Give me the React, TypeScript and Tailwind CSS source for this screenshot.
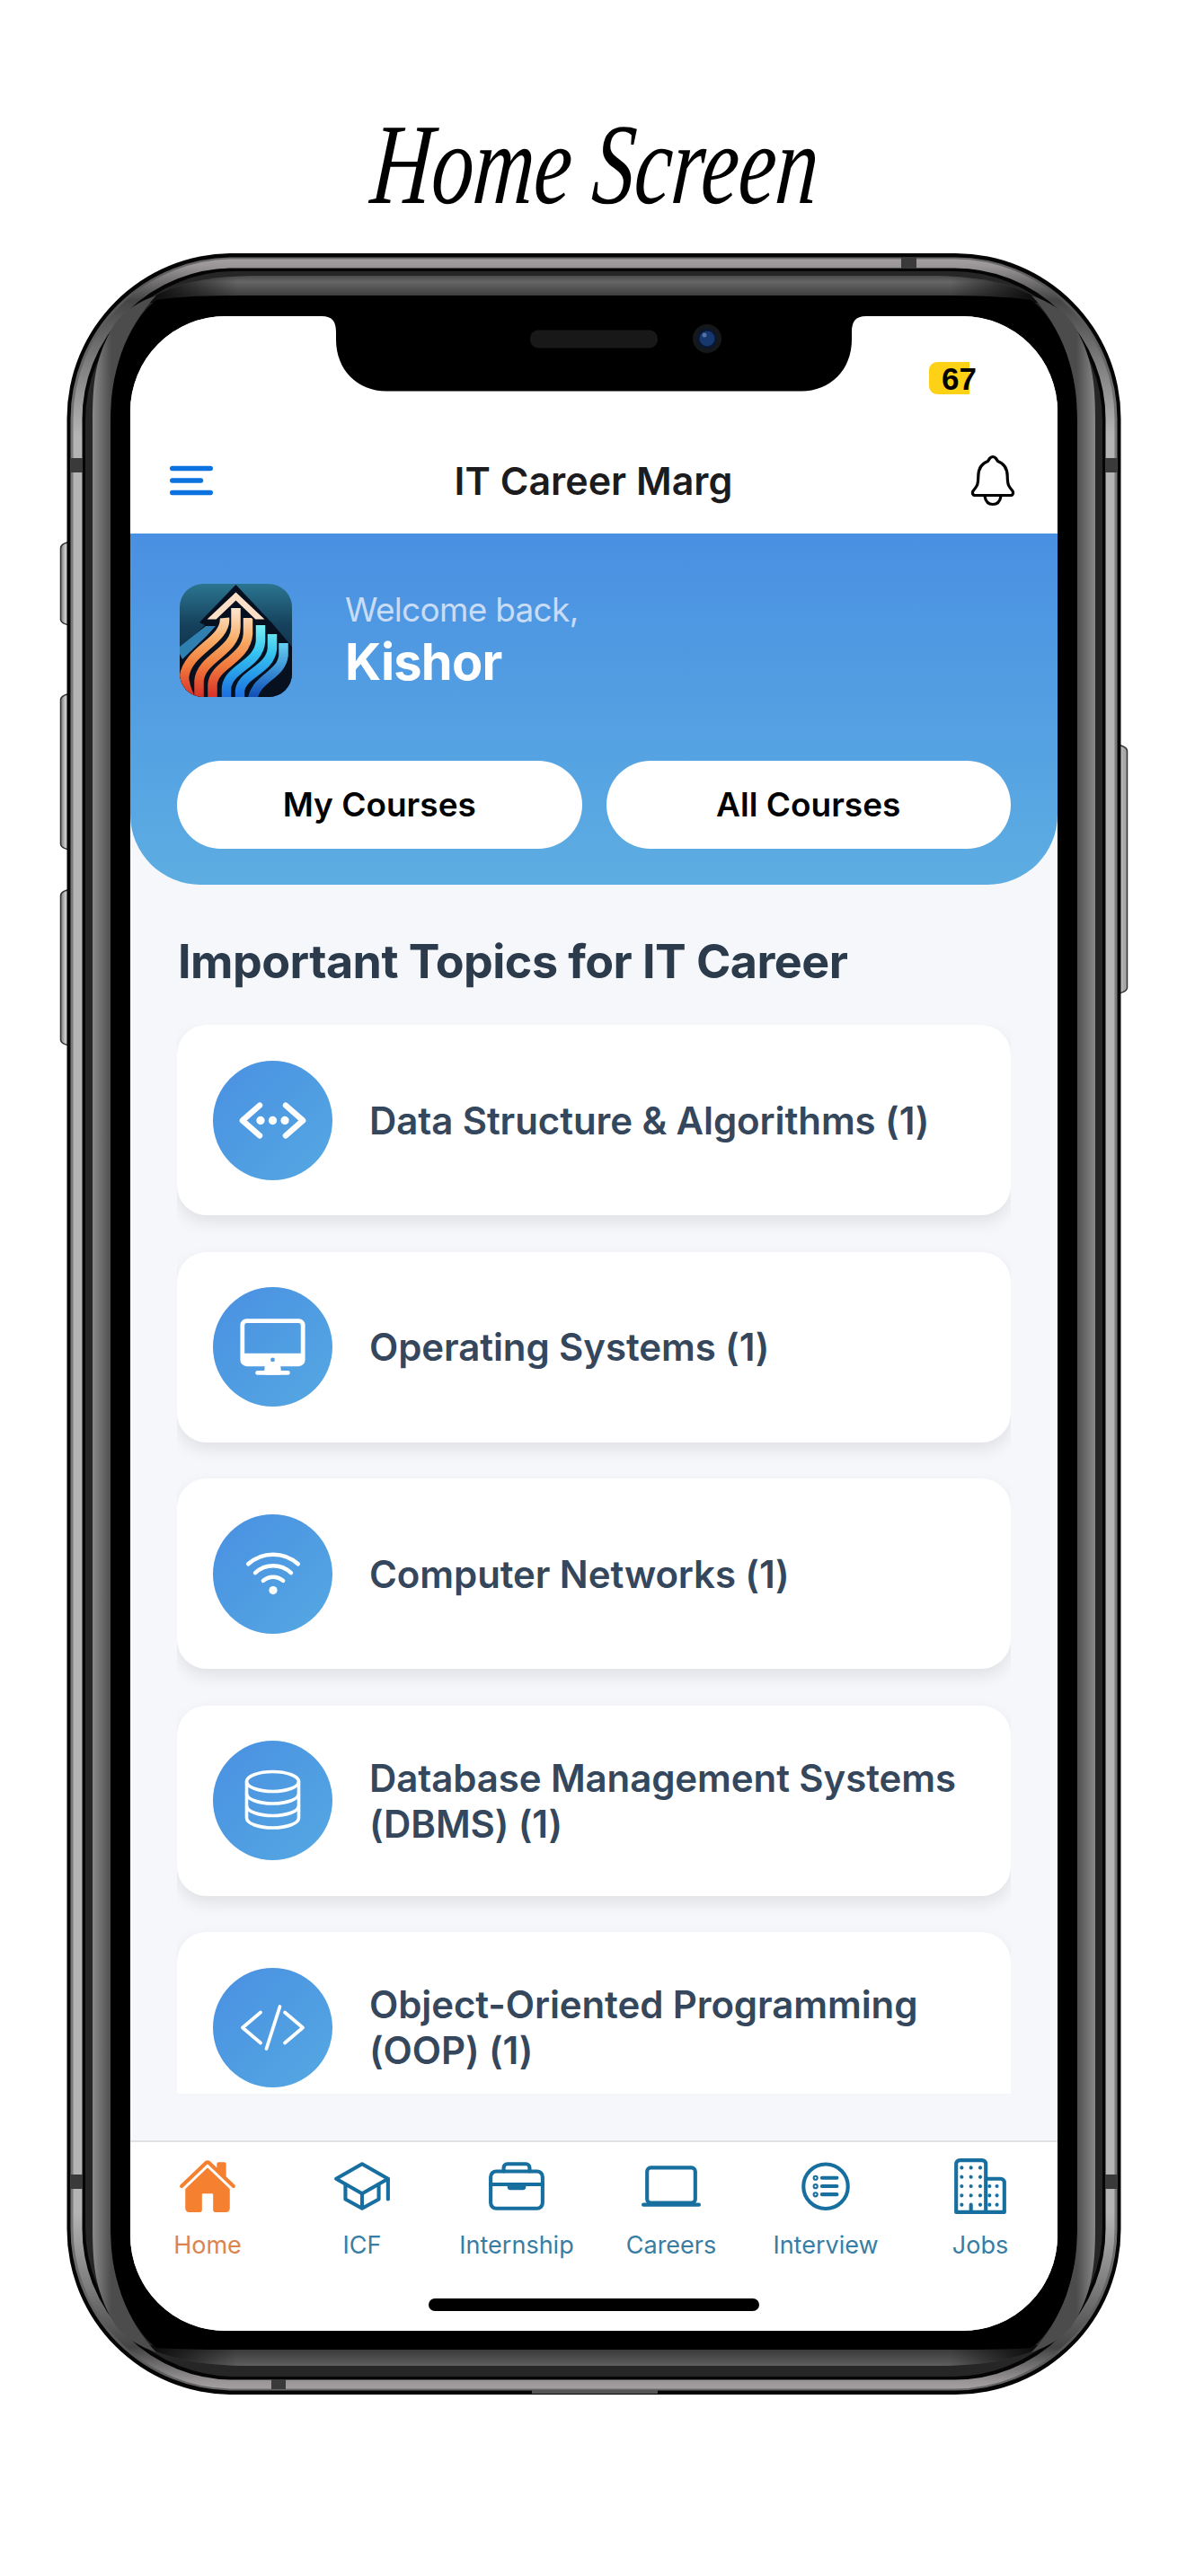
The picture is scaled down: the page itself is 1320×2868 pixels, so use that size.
import React from "react";
import {
  IoHome,
  IoSchoolOutline,
  IoBriefcaseOutline,
  IoLaptopOutline,
  IoListCircleOutline,
  IoBusinessOutline,
  IoCodeWorking,
  IoDesktopOutline,
  IoWifiOutline,
} from "react-icons/io5";

const sidePath =
  "M103 470 C103 425 106 396 128 360 C138 346 154 336 174 329 C158 346 144 368 135 393 C126 420 123 440 123 470 L123 2478 C123 2508 126 2528 135 2555 C144 2580 158 2602 174 2619 C154 2612 138 2602 128 2588 C106 2552 103 2523 103 2478 Z";

const topGlow = "M160 336 C192 316 230 308 280 307 L1042 307 C1092 308 1130 316 1162 336 L1100 345 L222 345 Z";
const bottomGlow = "M160 2612 C192 2628 230 2634 280 2634 L1042 2634 C1092 2634 1130 2628 1162 2612 L1100 2603 L222 2603 Z";

function PhoneFrame() {
  return (
    <svg className="absolute left-0 top-0" width="1320" height="2868" viewBox="0 0 1320 2868" aria-hidden="true">
      <defs>
        <linearGradient id="rim" gradientUnits="userSpaceOnUse" x1="0" y1="282" x2="0" y2="2666">
          <stop offset="0" stopColor="#aaa6a8" />
          <stop offset="0.006" stopColor="#9a9698" />
          <stop offset="0.022" stopColor="#444" />
          <stop offset="0.05" stopColor="#7c7c7c" />
          <stop offset="0.085" stopColor="#b4b4b4" />
          <stop offset="0.915" stopColor="#b4b4b4" />
          <stop offset="0.95" stopColor="#7c7c7c" />
          <stop offset="0.978" stopColor="#444" />
          <stop offset="0.994" stopColor="#9a9698" />
          <stop offset="1" stopColor="#aaa6a8" />
        </linearGradient>
        <linearGradient id="rimShade" gradientUnits="userSpaceOnUse" x1="0" y1="282" x2="0" y2="2666">
          <stop offset="0" stopColor="#6b696a" />
          <stop offset="0.02" stopColor="#555" />
          <stop offset="0.085" stopColor="#7a7a7a" />
          <stop offset="0.915" stopColor="#7a7a7a" />
          <stop offset="0.98" stopColor="#555" />
          <stop offset="1" stopColor="#6b696a" />
        </linearGradient>
        <linearGradient id="side" gradientUnits="userSpaceOnUse" x1="103" y1="0" x2="124" y2="0">
          <stop offset="0" stopColor="#898989" />
          <stop offset="1" stopColor="#4c4c4c" />
        </linearGradient>
        <linearGradient id="fade" gradientUnits="userSpaceOnUse" x1="165" y1="0" x2="1157" y2="0">
          <stop offset="0" stopColor="#0a0a0a" />
          <stop offset="0.1" stopColor="#0a0a0a" stopOpacity="0" />
          <stop offset="0.9" stopColor="#0a0a0a" stopOpacity="0" />
          <stop offset="1" stopColor="#0a0a0a" />
        </linearGradient>
        <linearGradient id="top" gradientUnits="userSpaceOnUse" x1="0" y1="307" x2="0" y2="329">
          <stop offset="0" stopColor="#4a4a4a" />
          <stop offset="0.3" stopColor="#666" />
          <stop offset="1" stopColor="#3e3e3e" />
        </linearGradient>
        <linearGradient id="bottom" gradientUnits="userSpaceOnUse" x1="0" y1="2616" x2="0" y2="2634">
          <stop offset="0" stopColor="#3a3a3a" />
          <stop offset="1" stopColor="#5e5e5e" />
        </linearGradient>
        <linearGradient id="key" x1="0" y1="0" x2="1" y2="0">
          <stop offset="0" stopColor="#777" />
          <stop offset="0.35" stopColor="#cacaca" />
          <stop offset="0.75" stopColor="#a8a8a8" />
        </linearGradient>
      </defs>
      <g stroke="#333" strokeWidth="1.500" fill="url(#key)">
        <path d="M82 603 Q68 604 67.500 610 V690 Q68 695 82 697 Z" />
        <path d="M82 772 Q68 773 67.500 779 V940 Q68 945 82 947 Z" />
        <path d="M82 990 Q68 991 67.500 997 V1158 Q68 1163 82 1165 Z" />
        <path d="M1240 829 Q1254 830 1254.500 836 V1100 Q1254 1105 1240 1107 Z" />
      </g>
      <rect x="74.500" y="282" width="1173" height="2384" rx="184" fill="#050505" />
      <rect x="80.500" y="288.500" width="1161" height="2371" rx="178" fill="none" stroke="url(#rimShade)" strokeWidth="4" />
      <rect x="86.500" y="293.500" width="1149" height="2361" rx="173" fill="none" stroke="url(#rim)" strokeWidth="10" />
      <rect x="93.500" y="300.500" width="1135" height="2347" rx="168" fill="#262626" stroke="#050505" strokeWidth="3" />
      <path d={topGlow} fill="url(#top)" />
      <path d={topGlow} fill="url(#fade)" />
      <path d={bottomGlow} fill="url(#bottom)" />
      <path d={bottomGlow} fill="url(#fade)" />
      <path
        d="M123 470 C123 440 126 420 135 393 C144 368 158 346 174 334 C202 330 236 329 280 329 L1042 329 C1086 329 1120 330 1148 334 C1164 346 1178 368 1187 393 C1196 420 1199 440 1199 470 L1199 2478 C1199 2508 1196 2528 1187 2555 C1178 2580 1164 2602 1148 2614 C1120 2616 1086 2616 1042 2616 L280 2616 C236 2616 202 2616 174 2614 C158 2602 144 2580 135 2555 C126 2528 123 2508 123 2478 Z"
        fill="#000"
      />
      <path d={sidePath} fill="url(#side)" />
      <path d={sidePath} fill="url(#side)" transform="translate(1322 0) scale(-1 1)" />
      <g fill="#3a3a3a">
        <rect x="79" y="510" width="13" height="16" />
        <rect x="1230" y="510" width="13" height="16" />
        <rect x="79" y="2421" width="13" height="16" />
        <rect x="1230" y="2421" width="13" height="16" />
        <rect x="1003" y="287" width="17" height="12" />
        <rect x="302" y="2649" width="16" height="11" />
      </g>
      <rect x="592" y="2661" width="140" height="4" fill="#555" />
    </svg>
  );
}

function Notch() {
  return (
    <svg className="absolute left-[213px] top-0" width="606" height="86" viewBox="0 0 606 86" aria-hidden="true">
      <path d="M0 -2 V0 C12 0 16 6 16 18 V26 C16 60 40 83.500 72 83.500 H534 C566 83.500 590 60 590 26 V18 C590 6 594 0 606 0 V-2 Z" fill="#000" />
      <rect x="232" y="15.500" width="142" height="20" rx="9" fill="#181818" />
      <circle cx="429" cy="25" r="16" fill="#15181b" />
      <circle cx="429" cy="25" r="11" fill="#0a1730" />
      <circle cx="429" cy="25" r="8.500" fill="#17386f" />
      <circle cx="426" cy="21" r="2.500" fill="#5272a8" />
    </svg>
  );
}

function BellIcon() {
  return (
    <svg className="mb-[2px] h-[58px] w-[50px]" viewBox="0 0 50 58" fill="none" stroke="#000" strokeWidth="3.200" strokeLinecap="round" strokeLinejoin="round" aria-label="Notifications">
      <path d="M25 2.500 C21.500 2.500 21 5.500 19.500 7.500 C12.500 10 9 15.500 8.800 24 C8.600 34 7.500 35.500 3.500 40 C1.500 42.500 2.500 45.500 5.500 45.500 H44.500 C47.500 45.500 48.500 42.500 46.500 40 C42.500 35.500 41.400 34 41.200 24 C41 15.500 37.500 10 30.500 7.500 C29 5.500 28.500 2.500 25 2.500 Z" />
      <path d="M16 46.500 C17 52.500 20.500 55.500 25 55.500 C29.500 55.500 33 52.500 34 46.500" />
    </svg>
  );
}

function DatabaseIcon({ className }: { className?: string }) {
  return (
    <svg className={className} viewBox="0 0 77 77" fill="none" stroke="currentColor" strokeWidth="3.600" aria-hidden="true">
      <ellipse cx="38.500" cy="17.500" rx="29" ry="11" />
      <path d="M9.500 17.500 V58 C9.500 64 22.500 69 38.500 69 S67.500 64 67.500 58 V17.500" />
      <path d="M9.500 31 C9.500 37 22.500 42 38.500 42 S67.500 37 67.500 31 M9.500 44.500 C9.500 50.500 22.500 55.500 38.500 55.500 S67.500 50.500 67.500 44.500" />
    </svg>
  );
}

function CodeIcon({ className }: { className?: string }) {
  return (
    <svg className={className} viewBox="0 0 77 77" fill="none" stroke="currentColor" strokeWidth="3.800" strokeLinecap="round" strokeLinejoin="round" aria-hidden="true">
      <path d="M25 21.500 L5 38.500 L25 55.500 M52 21.500 L72 38.500 L52 55.500 M46.500 15 L31.500 62" />
    </svg>
  );
}

function AppLogo() {
  return (
    <svg className="h-[126px] w-[125px] rounded-[26px]" viewBox="0 0 125 126" preserveAspectRatio="none" aria-label="IT Career Marg logo">
      <defs>
        <linearGradient id="bg" x1="0" y1="0" x2="0" y2="1">
          <stop offset="0" stopColor="#2c7590" />
          <stop offset="0.35" stopColor="#16435e" />
          <stop offset="1" stopColor="#08172e" />
        </linearGradient>
        <linearGradient id="warm" gradientUnits="userSpaceOnUse" x1="0" y1="30" x2="0" y2="124">
          <stop offset="0" stopColor="#fde3c8" />
          <stop offset="0.35" stopColor="#f8ab66" />
          <stop offset="0.65" stopColor="#f07a3c" />
          <stop offset="1" stopColor="#d9352a" />
        </linearGradient>
        <linearGradient id="cool" gradientUnits="userSpaceOnUse" x1="0" y1="45" x2="0" y2="126">
          <stop offset="0" stopColor="#7df0f0" />
          <stop offset="0.4" stopColor="#35c3f0" />
          <stop offset="1" stopColor="#1a6fe0" />
        </linearGradient>
        <linearGradient id="cool2" gradientUnits="userSpaceOnUse" x1="0" y1="60" x2="0" y2="126">
          <stop offset="0" stopColor="#6fdcf8" />
          <stop offset="1" stopColor="#0f4fb8" />
        </linearGradient>
      </defs>
      <rect width="125" height="126" fill="url(#bg)" />
      <path d="M62.500 1 L103 44 L125 70 V126 H0 V74 L28 46 L22 43 Z" fill="#06101f" />
      <path d="M0 78 L0 70 L29 47 L40 47 L30 58 L3 84 Z" fill="#2f7fb0" />
      <g fill="none" strokeWidth="10.500">
        <path d="M50 38 C52 64 8 74 5 104 C5 112 8 118 12 128" stroke="url(#warm)" />
        <path d="M62.500 27 V48 C62 76 24 82 21.500 108 V128" stroke="url(#warm)" />
        <path d="M76 38 V56 C74 84 38 90 36.500 112 V128" stroke="url(#warm)" />
        <path d="M90 46 V64 C88 90 54 94 52 116 V128" stroke="url(#cool)" />
        <path d="M103 56 V72 C101 96 69 100 67 119 V128" stroke="url(#cool)" />
        <path d="M115.500 66 V80 C113 102 86 104 81 128" stroke="url(#cool2)" />
      </g>
      <path d="M62.500 8 L97 40.500 H84 L62.500 20 L41 40.500 H28 Z" fill="#fde0c8" stroke="#06101f" strokeWidth="2" />
    </svg>
  );
}

const topics = [
  { label: "Data Structure & Algorithms (1)", Icon: IoCodeWorking, size: "size-[77px] text-white" },
  { label: "Operating Systems (1)", Icon: IoDesktopOutline, size: "size-[77px] text-white" },
  { label: "Computer Networks (1)", Icon: IoWifiOutline, size: "size-[74px] text-white" },
  { label: "Database Management Systems (DBMS) (1)", Icon: DatabaseIcon, size: "size-[77px] text-white" },
  { label: "Object-Oriented Programming (OOP) (1)", Icon: CodeIcon, size: "size-[77px] text-white" },
];

const tabs = [
  { label: "Home", Icon: IoHome, active: true },
  { label: "ICF", Icon: IoSchoolOutline },
  { label: "Internship", Icon: IoBriefcaseOutline },
  { label: "Careers", Icon: IoLaptopOutline },
  { label: "Interview", Icon: IoListCircleOutline },
  { label: "Jobs", Icon: IoBusinessOutline },
];

export default function App() {
  return (
    <div className="relative h-[2868px] w-[1320px] overflow-hidden bg-white font-['Inter',sans-serif]">
      <PhoneFrame />
      <h1 className="flex h-[352px] items-start justify-center pt-[108px] pl-[6px] font-['Liberation_Serif',serif] text-[128px] leading-[150px] text-black italic">
        <span className="inline-block origin-center scale-x-[0.73] -skew-x-6 whitespace-nowrap">Home Screen</span>
      </h1>

      <div className="relative ml-[145px] flex h-[2243px] w-[1032px] flex-col overflow-hidden rounded-[106px] bg-[#f5f7fb]">
        <Notch />
        <div className="flex h-[242px] shrink-0 flex-col bg-white">
          <div className="flex h-[126px] shrink-0 items-start justify-end pt-[51px] pr-[89px]">
            <div className="flex h-[36px] w-[54px] items-center rounded-l-[9px] bg-linear-to-r from-[#fdd116] from-[45px] to-transparent to-[45px] pl-[14px] font-['Liberation_Sans',sans-serif] text-[35px] leading-none font-bold text-black">
              67
            </div>
          </div>
          <div className="flex h-[116px] items-center justify-between pr-[47px] pl-[44px]">
            <svg width="48" height="36" viewBox="0 0 48 36" className="mb-[2px]" stroke="#0b72e0" strokeWidth="5.500" strokeLinecap="round" aria-label="Menu">
              <path d="M2.750 4.500 H45.250 M2.750 18 H34.500 M2.750 31.500 H45.250" />
            </svg>
            <div className="mb-[2px] ml-[4px] text-[43px] leading-none font-semibold text-[#1c1c1e]">IT Career Marg</div>
            <BellIcon />
          </div>
        </div>

        <div className="flex h-[391px] shrink-0 flex-col rounded-b-[78px] bg-linear-to-b from-[#4a90e2] to-[#5dade2] px-[52px] pt-[56px]">
          <div className="flex items-start pl-[3px]">
            <AppLogo />
            <div className="ml-[59px] pt-[4px]">
              <div className="text-[37px] leading-[50px] tracking-[-0.7px] text-[#c8dcf6]">Welcome back,</div>
              <div className="text-[56px] leading-[66px] font-bold tracking-[-0.8px] text-white">Kishor</div>
            </div>
          </div>
          <div className="mt-[71px] flex gap-[27px]">
            {["My Courses", "All Courses"].map((label) => (
              <button key={label} className="h-[98px] flex-1 rounded-full bg-white text-[37px] font-semibold text-black">
                {label}
              </button>
            ))}
          </div>
        </div>

        <h2 className="mt-[52px] ml-[53px] text-[52px] leading-[68px] font-bold tracking-[-0.55px] whitespace-nowrap text-[#2c3b4c]">Important Topics for IT Career</h2>
        <div className="mx-[52px] mt-[36px] flex h-[1190px] shrink-0 flex-col gap-[40.500px] overflow-hidden">
          {topics.map(({ label, Icon, size }) => (
            <div key={label} className="flex h-[212px] shrink-0 items-center rounded-[33px] bg-white pl-[40px] shadow-[0_8px_18px_rgba(0,0,0,0.09)]">
              <div className="flex size-[133px] shrink-0 items-center justify-center rounded-full bg-linear-to-br from-[#4a90e2] to-[#55a8e2]">
                <Icon className={size} />
              </div>
              <div className="ml-[41px] w-[670px] text-[42px] leading-[51px] font-semibold tracking-[-0.1px] text-[#34475c]">{label}</div>
            </div>
          ))}
        </div>

        <div className="mt-[52px] flex h-[212px] shrink-0 flex-col items-center border-t-[2px] border-[#e2e2e6] bg-white">
          <div className="flex w-full pt-[16px]">
            {tabs.map(({ label, Icon, active }) => (
              <div key={label} className={active ? "flex w-[172px] flex-col items-center text-[#f58030]" : "flex w-[172px] flex-col items-center text-[#176f9f]"}>
                <Icon className="size-[66px]" />
                <span className={active ? "mt-[17px] text-[27px] leading-[32px] text-[#dc8450]" : "mt-[17px] text-[27px] leading-[32px] text-[#387da3]"}>{label}</span>
              </div>
            ))}
          </div>
          <div className="mt-[43px] h-[14px] w-[368px] rounded-full bg-black" />
        </div>
      </div>
    </div>
  );
}
